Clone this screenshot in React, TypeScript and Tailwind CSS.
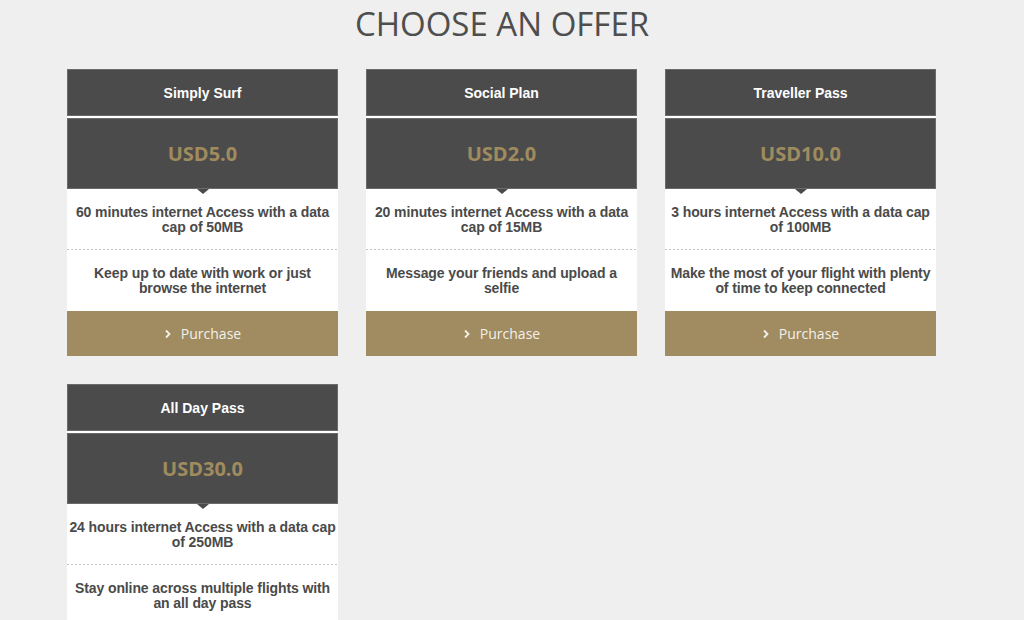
import React from 'react';

interface Offer {
  name: string;
  price: string;
  access: string;
  blurb: string;
}

const offers: Offer[] = [
  {
    name: 'Simply Surf',
    price: 'USD5.0',
    access: '60 minutes internet Access with a data cap of 50MB',
    blurb: 'Keep up to date with work or just browse the internet',
  },
  {
    name: 'Social Plan',
    price: 'USD2.0',
    access: '20 minutes internet Access with a data cap of 15MB',
    blurb: 'Message your friends and upload a selfie',
  },
  {
    name: 'Traveller Pass',
    price: 'USD10.0',
    access: '3 hours internet Access with a data cap of 100MB',
    blurb: 'Make the most of your flight with plenty of time to keep connected',
  },
  {
    name: 'All Day Pass',
    price: 'USD30.0',
    access: '24 hours internet Access with a data cap of 250MB',
    blurb: 'Stay online across multiple flights with an all day pass',
  },
];

const OfferCard: React.FC<{ offer: Offer }> = ({ offer }) => (
  <div className="bg-white flex flex-col">
    <div className="h-[47px] pt-[1px] bg-[#4b4b4b] border border-[#6a6a6a] flex items-center justify-center text-white text-[14px] font-bold font-['Liberation_Sans',Arial,sans-serif]">
      {offer.name}
    </div>
    <div className="relative mt-[2px] h-[71px] bg-[#4b4b4b] border border-[#6a6a6a] flex items-center justify-center">
      <span className="text-[#a08b5e] text-[20px] font-bold font-['Open_Sans',sans-serif]">{offer.price}</span>
      {/* little pointer under the price */}
      <span className="absolute left-1/2 -translate-x-1/2 -bottom-[6px] w-0 h-0 border-l-[6px] border-r-[6px] border-t-[5px] border-l-transparent border-r-transparent border-t-[#4b4b4b]" />
    </div>
    <div className="font-['Liberation_Sans',Arial,sans-serif] font-bold text-[14px] leading-[15px] tracking-[-0.1px] text-[#4a4a4a] text-center">
      <div className="pt-[16px] pb-[14px]">{offer.access}</div>
      <div className="h-[1px] bg-[repeating-linear-gradient(to_right,#c6c6c6_0_2px,transparent_2px_4px)]" />
      <div className="pt-[16px] pb-[15px] px-[3px]">{offer.blurb}</div>
    </div>
    <button className="h-[45px] bg-[#a08c60] flex items-center justify-center gap-[9px] text-[#f3f0ea] text-[14px] font-['Open_Sans',sans-serif]">
      <svg width="8" height="10" viewBox="0 0 8 10" fill="none" stroke="currentColor" strokeWidth="1.8">
        <path d="M2 1.5 L5.5 5 L2 8.5" />
      </svg>
      Purchase
    </button>
  </div>
);

export default function App() {
  return (
    <div className="min-h-[620px] bg-[#efefef] w-full">
      <div className="w-[1004px]">
        <h1 className="pt-[4px] text-center text-[33px] leading-[40px] text-[#4e4e4e] font-['Open_Sans',sans-serif] font-normal">
          CHOOSE AN OFFER
        </h1>
        <div className="mt-[25px] pl-[67px] grid grid-cols-[271px_271px_271px] gap-[28px] items-start">
          {offers.map((o) => (
            <OfferCard key={o.name} offer={o} />
          ))}
        </div>
      </div>
    </div>
  );
}
